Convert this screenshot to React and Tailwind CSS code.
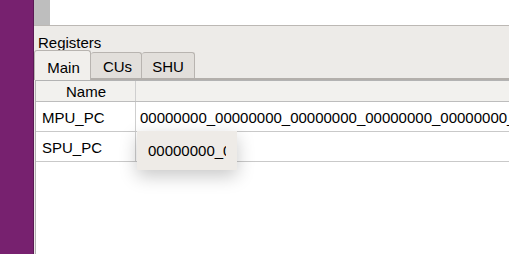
export default function App() {
  const rows = [
    { name: 'MPU_PC', value: '00000000_00000000_00000000_00000000_00000000_00000000' },
    { name: 'SPU_PC', value: '' },
  ]
  const font = { fontFamily: '"Liberation Sans", Arial, sans-serif' }

  return (
    <div className="relative flex h-[254px] w-[509px] overflow-hidden text-[15px] leading-[17px] text-black" style={font}>
      {/* desktop strip */}
      <div className="w-[33px] shrink-0 bg-[#77216f]" />
      <div className="w-[1px] shrink-0 bg-[#5a1954]" />

      <div className="flex min-w-0 flex-1 flex-col">
        {/* top area */}
        <div className="flex h-[26px] shrink-0 border-b border-[#bcb8b4]">
          <div className="w-[16px] bg-[#bebebe]" />
          <div className="flex-1 bg-white" />
        </div>

        <div className="flex flex-1 flex-col bg-[#edebe8]">
          <div className="pl-[4px] pt-[8px]">Registers</div>

          {/* tabs */}
          <div className="mt-[1px] flex h-[28px] shrink-0 items-end border-b-[2px] border-double border-[#b3afab]">
            <div className="relative -mb-[2px] flex h-[30px] w-[57px] items-center justify-center rounded-t-[3px] border border-b-0 border-[#b8b4b0] bg-[#f1efec] pl-[2px] pt-[3px]">
              Main
            </div>
            <div className="flex h-[26px] w-[51px] items-center justify-center rounded-t-[3px] border border-b-0 border-l-0 border-[#b8b4b0] bg-[#e2dfdb] pl-[3px] pt-[2px]">
              CUs
            </div>
            <div className="flex h-[26px] w-[53px] items-center justify-center rounded-t-[3px] border border-b-0 border-l-0 border-[#b8b4b0] bg-[#e2dfdb] pt-[2px]">
              SHU
            </div>
          </div>

          {/* table */}
          <div className="ml-[1px] flex-1 border-l border-t border-[#b3b3b3] bg-white">
            <div className="flex h-[21px] border-b border-[#bdbdbd] bg-[#f2f1ee]">
              <div className="flex w-[100px] items-center justify-center border-r border-[#cfcfcf] pl-[1px]">Name</div>
              <div className="flex-1" />
            </div>
            {rows.map(r => (
              <div key={r.name} className="flex h-[30px] border-b border-[#c9c9c9]">
                <div className="flex w-[100px] shrink-0 items-center border-r border-[#cfcfcf] pl-[6px] pt-[1px]">{r.name}</div>
                <div className="flex items-center whitespace-nowrap pl-[4px] pt-[1px]">{r.value}</div>
              </div>
            ))}
          </div>
        </div>
      </div>

      {/* editor popup */}
      <div className="absolute left-[137px] top-[131px] flex h-[39px] w-[100px] items-center bg-[#eeebe7] pl-[11px] shadow-[0_6px_18px_rgba(0,0,0,0.22)]">
        <div className="w-[78px] overflow-hidden whitespace-nowrap">00000000_00000000</div>
      </div>
    </div>
  )
}
